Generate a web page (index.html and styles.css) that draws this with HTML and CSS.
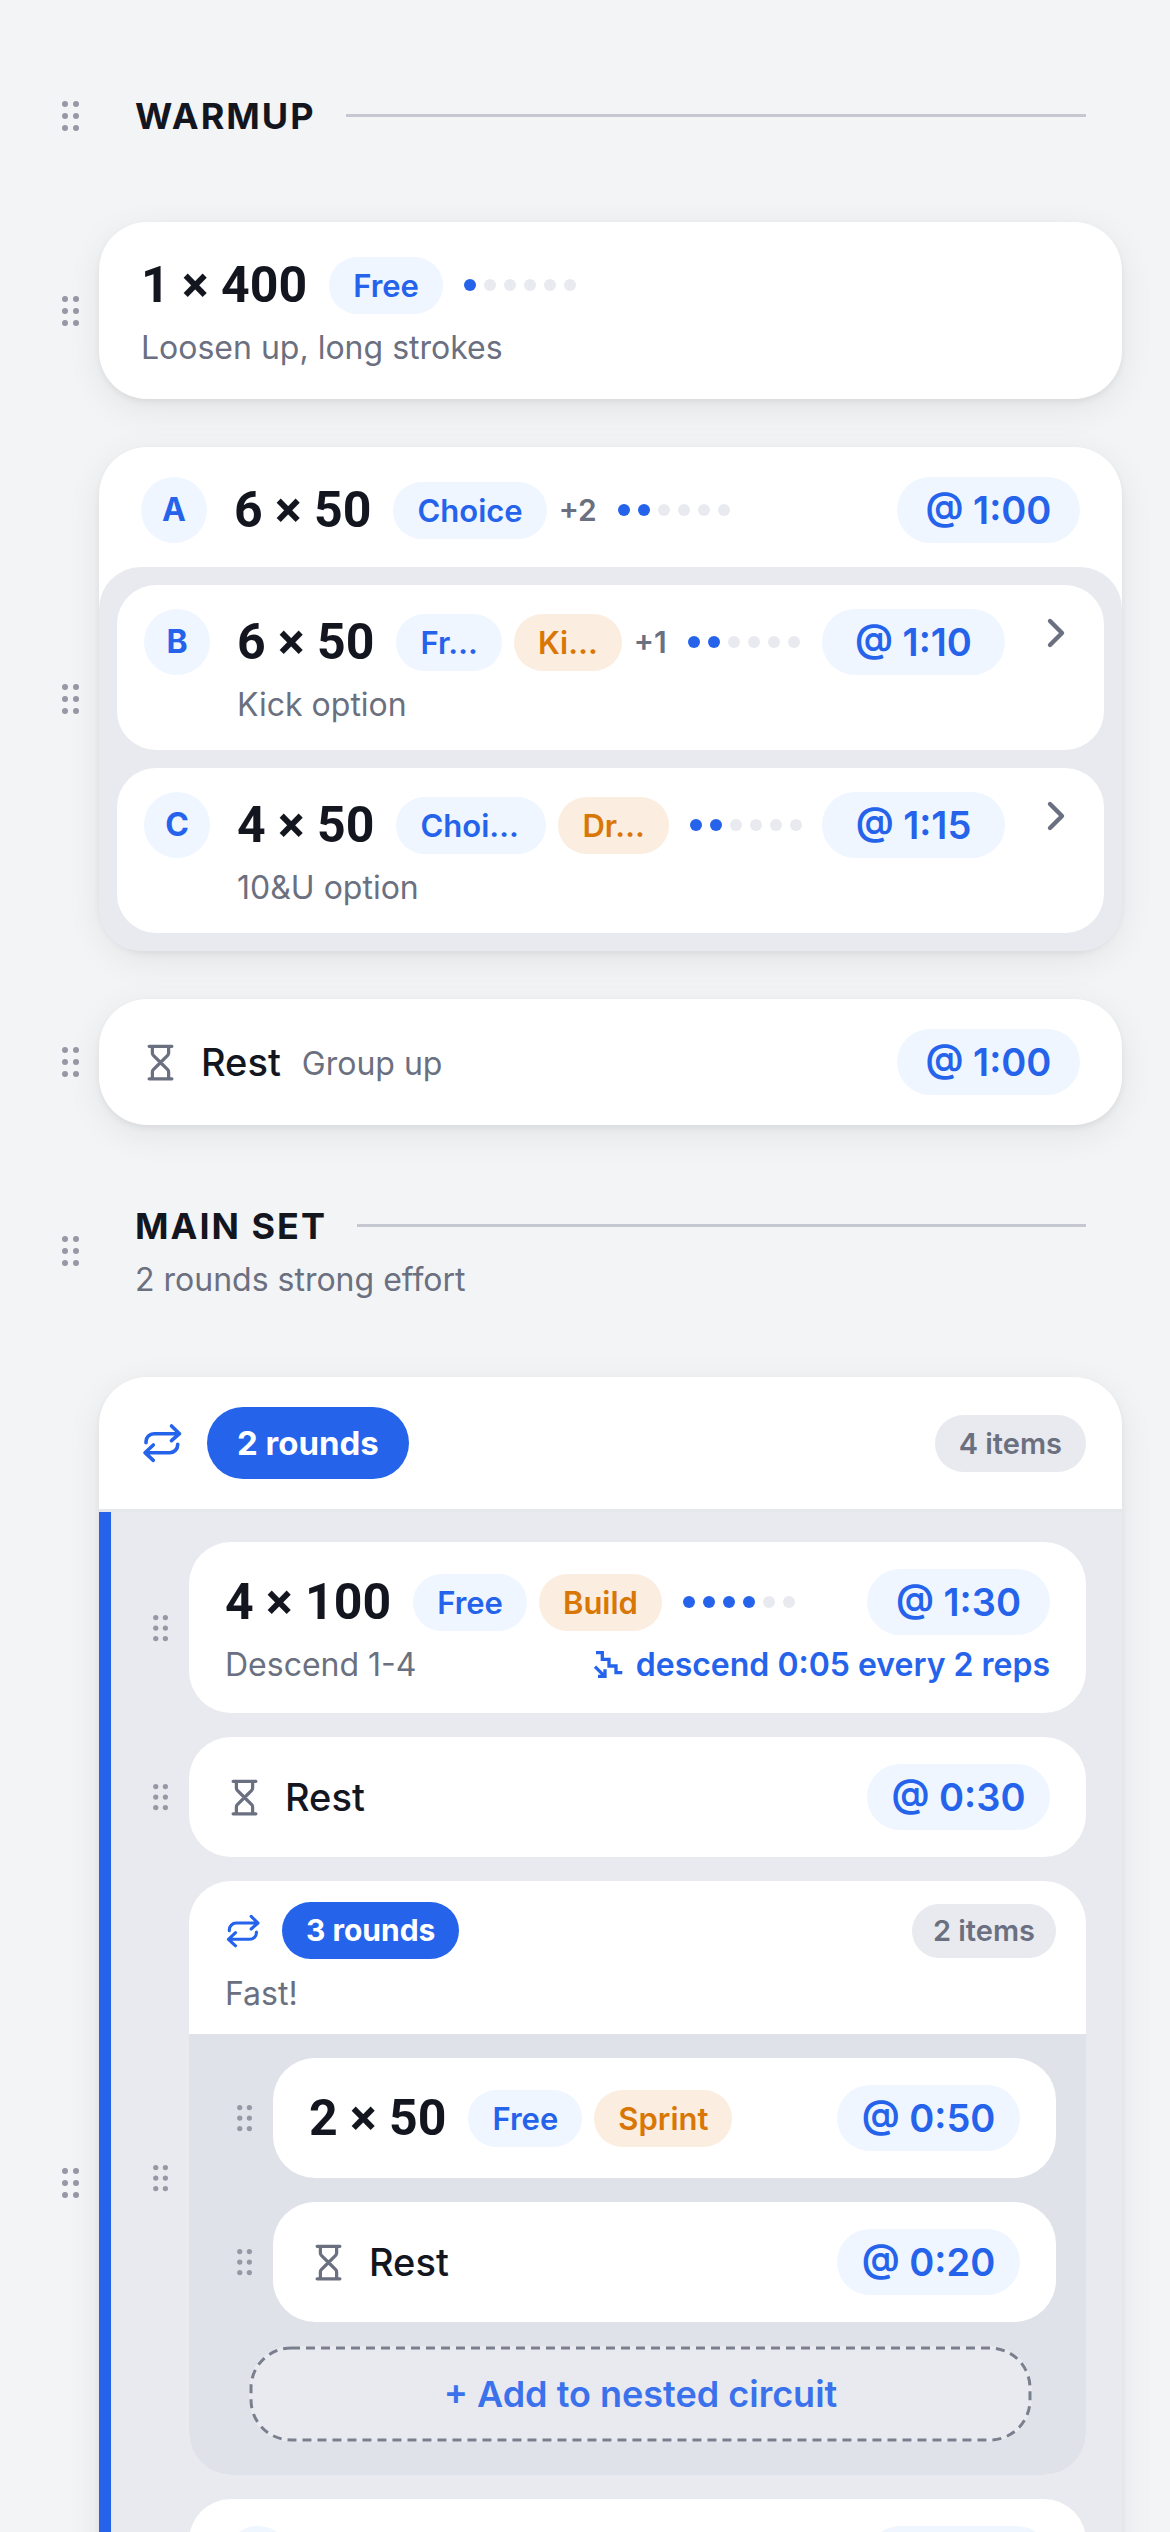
FILE: index.html
```
<!DOCTYPE html>
<html lang="en">
<head>
<meta charset="UTF-8">
<meta name="viewport" content="width=device-width, initial-scale=1.0">
<title>Workout</title>
<link rel="stylesheet" href="styles.css">
</head>
<body>
<svg class="sprite" aria-hidden="true">
    <symbol id="grip" viewBox="0 0 20 32">
        <circle cx="4" cy="4" r="3"/><circle cx="15" cy="4" r="3"/>
        <circle cx="4" cy="16" r="3"/><circle cx="15" cy="16" r="3"/>
        <circle cx="4" cy="28" r="3"/><circle cx="15" cy="28" r="3"/>
    </symbol>
    <symbol id="repeat" viewBox="0 0 42 42">
        <path d="M30.5 4l8 7.7-8 7M38 11.7H13a8 8 0 0 0-8 8v1M12.3 23L4 30.7l8.3 7.6M4.5 30.7h24.2a8 8 0 0 0 8-8v-.5"/>
    </symbol>
    <symbol id="hourglass" viewBox="0 0 24 24">
        <path d="M5 22h14M5 2h14M17 22v-4.172a2 2 0 0 0-.586-1.414L12 12l-4.414 4.414A2 2 0 0 0 7 17.828V22M7 2v4.172a2 2 0 0 0 .586 1.414L12 12l4.414-4.414A2 2 0 0 0 17 6.172V2"/>
    </symbol>
    <symbol id="chevron" viewBox="0 0 24 24">
        <path d="M9 18l6-6-6-6"/>
    </symbol>
    <symbol id="steps" viewBox="6 6 36 36">
        <path d="M11 11.7h6.3v6.6H24V25h7v6.7h6.3M10 25.7l9.7 9.6M20 28.3v7h-7"/>
    </symbol>
</svg>
<main class="workout">
    <div class="row">
        <button class="handle" aria-label="Move Warmup"><svg><use href="#grip"/></svg></button>
        <section class="section">
            <h2>Warmup</h2>
        </section>
    </div>

    <div class="row">
        <button class="handle" aria-label="Move 1 × 400"><svg><use href="#grip"/></svg></button>
        <article class="card">
            <div class="line">
                <span class="reps">1 × 400</span>
                <span class="chip">Free</span>
                <span class="effort"><i class="on"></i><i></i><i></i><i></i><i></i><i></i></span>
            </div>
            <p class="note">Loosen up, long strokes</p>
        </article>
    </div>

    <div class="row">
        <button class="handle" aria-label="Move 6 × 50"><svg><use href="#grip"/></svg></button>
        <article class="group">
            <div class="line lead">
                <span class="badge">A</span>
                <span class="reps">6 × 50</span>
                <span class="chip">Choice</span>
                <span class="more">+2</span>
                <span class="effort"><i class="on"></i><i class="on"></i><i></i><i></i><i></i><i></i></span>
                <span class="time">@ 1:00</span>
            </div>
            <div class="options">
                <div class="option">
                    <span class="badge">B</span>
                    <div class="option-main">
                        <div class="line">
                            <span class="reps">6 × 50</span>
                            <span class="chip short">Fr…</span>
                            <span class="chip short drill">Ki…</span>
                            <span class="more">+1</span>
                            <span class="effort"><i class="on"></i><i class="on"></i><i></i><i></i><i></i><i></i></span>
                            <span class="time">@ 1:10</span>
                        </div>
                        <p class="note">Kick option</p>
                    </div>
                    <button class="open" aria-label="Open option B"><svg><use href="#chevron"/></svg></button>
                </div>
                <div class="option">
                    <span class="badge">C</span>
                    <div class="option-main">
                        <div class="line">
                            <span class="reps">4 × 50</span>
                            <span class="chip wide">Choi…</span>
                            <span class="chip short drill">Dr…</span>
                            <span class="effort"><i class="on"></i><i class="on"></i><i></i><i></i><i></i><i></i></span>
                            <span class="time">@ 1:15</span>
                        </div>
                        <p class="note">10&amp;U option</p>
                    </div>
                    <button class="open" aria-label="Open option C"><svg><use href="#chevron"/></svg></button>
                </div>
            </div>
        </article>
    </div>

    <div class="row">
        <button class="handle" aria-label="Move Rest"><svg><use href="#grip"/></svg></button>
        <article class="card">
            <div class="line">
                <svg class="glass"><use href="#hourglass"/></svg>
                <span class="rest">Rest</span>
                <span class="note inline">Group up</span>
                <span class="time">@ 1:00</span>
            </div>
        </article>
    </div>

    <div class="row">
        <button class="handle" aria-label="Move Main set"><svg><use href="#grip"/></svg></button>
        <section class="section">
            <h2>Main set</h2>
            <p class="note">2 rounds strong effort</p>
        </section>
    </div>

    <div class="row">
        <button class="handle" aria-label="Move circuit"><svg><use href="#grip"/></svg></button>
        <article class="circuit">
            <header class="circuit-head">
                <svg class="repeat"><use href="#repeat"/></svg>
                <span class="rounds">2 rounds</span>
                <span class="count">4 items</span>
            </header>
            <div class="circuit-body">
                <div class="row">
                    <button class="handle" aria-label="Move 4 × 100"><svg><use href="#grip"/></svg></button>
                    <div class="card">
                        <div class="line">
                            <span class="reps">4 × 100</span>
                            <span class="chip">Free</span>
                            <span class="chip drill">Build</span>
                            <span class="effort"><i class="on"></i><i class="on"></i><i class="on"></i><i class="on"></i><i></i><i></i></span>
                            <span class="time">@ 1:30</span>
                        </div>
                        <div class="note split">
                            <span>Descend 1-4</span>
                            <span class="interval"><svg><use href="#steps"/></svg>descend 0:05 every 2 reps</span>
                        </div>
                    </div>
                </div>

                <div class="row">
                    <button class="handle" aria-label="Move Rest"><svg><use href="#grip"/></svg></button>
                    <div class="card">
                        <div class="line">
                            <svg class="glass"><use href="#hourglass"/></svg>
                            <span class="rest">Rest</span>
                            <span class="time">@ 0:30</span>
                        </div>
                    </div>
                </div>

                <div class="row">
                    <button class="handle" aria-label="Move nested circuit"><svg><use href="#grip"/></svg></button>
                    <div class="nested">
                        <header class="nested-head">
                            <div class="line">
                                <svg class="repeat"><use href="#repeat"/></svg>
                                <span class="rounds">3 rounds</span>
                                <span class="count">2 items</span>
                            </div>
                            <p class="note">Fast!</p>
                        </header>
                        <div class="nested-body">
                            <div class="row">
                                <button class="handle" aria-label="Move 2 × 50"><svg><use href="#grip"/></svg></button>
                                <div class="card">
                                    <div class="line">
                                        <span class="reps">2 × 50</span>
                                        <span class="chip">Free</span>
                                        <span class="chip drill">Sprint</span>
                                        <span class="time">@ 0:50</span>
                                    </div>
                                </div>
                            </div>
                            <div class="row">
                                <button class="handle" aria-label="Move Rest"><svg><use href="#grip"/></svg></button>
                                <div class="card">
                                    <div class="line">
                                        <svg class="glass"><use href="#hourglass"/></svg>
                                        <span class="rest">Rest</span>
                                        <span class="time">@ 0:20</span>
                                    </div>
                                </div>
                            </div>
                            <button class="add"><svg aria-hidden="true"><rect x="2" y="2" rx="40"/></svg>+ Add to nested circuit</button>
                        </div>
                    </div>
                </div>

                <div class="row">
                    <div class="handle"></div>
                    <div class="card">
                        <div class="line">
                            <span class="badge"></span>
                            <span class="time"></span>
                        </div>
                    </div>
                </div>
            </div>
        </article>
    </div>
</main>
</body>
</html>
```
FILE: styles.css
```
:root{
    --bg:#f3f4f6;
    --ink:#14161f;
    --muted:#6b7080;
    --blue:#2563eb;
    --blue-soft:#eff6ff;
    --orange:#d97706;
    --orange-soft:#fbeee0;
    --panel:#e9eaef;
    --panel-deep:#dfe2e9;
    --grip:#9698a5;
    --rule:#c5c7d1;
}
*{box-sizing:border-box;}
body{
    margin:0;
    height:100vh;
    overflow:hidden;
    background:var(--bg);
    color:var(--ink);
    font-family:Inter,"Liberation Sans",sans-serif;
}
button{
    border:none;
    padding:0;
    background:none;
    font-family:inherit;
    cursor:pointer;
}
h2,p{margin:0;}
svg{flex:none;}
.sprite{display:none;}
.workout{
    display:flex;
    flex-direction:column;
    gap:48px;
    padding:57px 48px 48px 42px;
}

/* rows and drag handles */
.row{
    display:flex;
    align-items:stretch;
}
.row > :last-child{
    flex:1;
    min-width:0;
}
.handle{
    flex:none;
    width:57px;
    display:flex;
    align-items:center;
    justify-content:center;
    cursor:grab;
}
.handle svg{
    width:20px;
    height:32px;
    fill:var(--grip);
}

/* section titles */
.section{
    display:flex;
    flex-direction:column;
    justify-content:center;
    min-height:117px;
    padding:0 36px;
}
.section h2{
    display:flex;
    align-items:center;
    gap:30px;
    font-size:36px;
    line-height:48px;
    font-weight:700;
    letter-spacing:2px;
    text-transform:uppercase;
}
.section h2::after{
    content:"";
    flex:1;
    height:3px;
    background:var(--rule);
}
.section:has(.note){min-height:156px;}

/* cards */
.card,.group,.circuit{
    border-radius:48px;
    background:#fff;
    box-shadow:0 3px 6px rgba(0,0,0,.06),0 9px 36px rgba(0,0,0,.07);
}
.card{padding:30px 42px;}
.line{
    display:flex;
    align-items:center;
    min-height:66px;
    white-space:nowrap;
}
.reps{
    margin-right:22px;
    font-family:Roboto,sans-serif;
    font-size:50px;
    line-height:60px;
    font-weight:700;
}
.chip{
    flex:none;
    padding:0 24px;
    border-radius:29px;
    background:var(--blue-soft);
    color:var(--blue);
    font-size:31px;
    line-height:57px;
    font-weight:600;
}
.chip.drill{
    background:var(--orange-soft);
    color:var(--orange);
}
.chip.short{min-width:105px;}
.chip.wide{min-width:150px;}
.chip + .chip{margin-left:12px;}
.more{
    margin-left:12px;
    color:var(--muted);
    font-size:30px;
    font-weight:600;
}
.effort{
    display:flex;
    gap:8px;
    margin-left:21px;
}
.effort i{
    width:12px;
    height:12px;
    border-radius:50%;
    background:var(--panel);
}
.effort .on{background:var(--blue);}
.time{
    flex:none;
    min-width:183px;
    height:66px;
    margin-left:auto;
    border-radius:33px;
    background:var(--blue-soft);
    color:var(--blue);
    font-size:38px;
    line-height:66px;
    font-weight:600;
    text-align:center;
}
.note{
    margin-top:8px;
    color:var(--muted);
    font-size:32px;
    line-height:43px;
    font-weight:400;
}
.note.inline{margin:3px 0 0 21px;}
.split{
    display:flex;
    justify-content:space-between;
}
.interval{
    display:flex;
    align-items:center;
    gap:9px;
    color:var(--blue);
    font-size:32px;
    font-weight:600;
}
.interval svg{
    width:36px;
    height:36px;
    fill:none;
    stroke:currentColor;
    stroke-width:3.3;
}
.glass{
    width:39px;
    height:39px;
    margin-right:21px;
    fill:none;
    stroke:var(--muted);
    stroke-width:2;
    stroke-linecap:round;
    stroke-linejoin:round;
}
.rest{
    font-size:38px;
    line-height:48px;
    font-weight:500;
}

/* set with alternatives */
.badge{
    flex:none;
    width:66px;
    height:66px;
    margin-right:27px;
    border-radius:50%;
    background:var(--blue-soft);
    color:var(--blue);
    font-size:32px;
    line-height:66px;
    font-weight:700;
    text-align:center;
}
.lead{padding:30px 42px 24px;}
.options{
    display:flex;
    flex-direction:column;
    gap:18px;
    padding:18px;
    border-radius:42px;
    background:var(--panel);
}
.option{
    display:flex;
    align-items:flex-start;
    padding:24px 24px 24px 27px;
    border-radius:39px;
    background:#fff;
}
.option-main{
    flex:1;
    min-width:0;
}
.open{
    width:48px;
    height:48px;
    margin-left:27px;
}
.open svg{
    display:block;
    width:48px;
    height:48px;
    fill:none;
    stroke:var(--muted);
    stroke-width:2.2;
    stroke-linecap:round;
    stroke-linejoin:round;
}

/* circuits */
.circuit,.nested{overflow:hidden;}
.circuit-head{
    display:flex;
    align-items:center;
    padding:30px 36px 30px 42px;
    border-bottom:3px solid #e5e7eb;
}
.repeat{
    width:42px;
    height:42px;
    margin-right:24px;
    fill:none;
    stroke:var(--blue);
    stroke-width:3.6;
    stroke-linecap:round;
    stroke-linejoin:round;
}
.rounds{
    padding:0 30px;
    border-radius:36px;
    background:var(--blue);
    color:#fff;
    font-size:33px;
    line-height:72px;
    font-weight:700;
}
.count{
    margin-left:auto;
    padding:0 24px;
    border-radius:29px;
    background:var(--panel);
    color:var(--muted);
    font-size:29px;
    line-height:57px;
    font-weight:600;
}
.circuit-body{
    display:flex;
    flex-direction:column;
    gap:24px;
    min-height:1476px;
    padding:30px 36px 48px 21px;
    border-left:12px solid var(--blue);
    background:var(--panel);
}
.circuit-body .card{
    padding:27px 36px;
    border-radius:42px;
    box-shadow:none;
}
.circuit-body .handle svg{
    width:18px;
    height:28px;
}
.nested{
    border-radius:42px;
    background:#fff;
}
.nested-head{padding:21px 30px 18px 36px;}
.nested-head .line{min-height:57px;}
.nested-head .note{
    margin-top:12px;
    line-height:45px;
}
.nested-head .repeat{
    width:36px;
    height:36px;
    margin-right:21px;
}
.nested-head .rounds{
    padding:0 24px;
    font-size:30px;
    line-height:57px;
}
.nested-head .count{
    padding:0 21px;
    line-height:54px;
}
.nested-body{
    display:flex;
    flex-direction:column;
    gap:24px;
    padding:24px 30px 33px 27px;
    background:var(--panel-deep);
}
.add{
    position:relative;
    height:96px;
    margin:0 24px 0 33px;
    border-radius:42px;
    background:#e8eaef;
    color:#3b72ec;
    font-size:36px;
    font-weight:600;
}
/* dashed outline, longer dashes than a css border gives */
.add svg{
    position:absolute;
    top:0;
    left:0;
    width:100%;
    height:100%;
}
.add rect{
    width:calc(100% - 4px);
    height:calc(100% - 4px);
    fill:none;
    stroke:#7a7f8e;
    stroke-width:3;
    stroke-dasharray:9 6;
}
```
